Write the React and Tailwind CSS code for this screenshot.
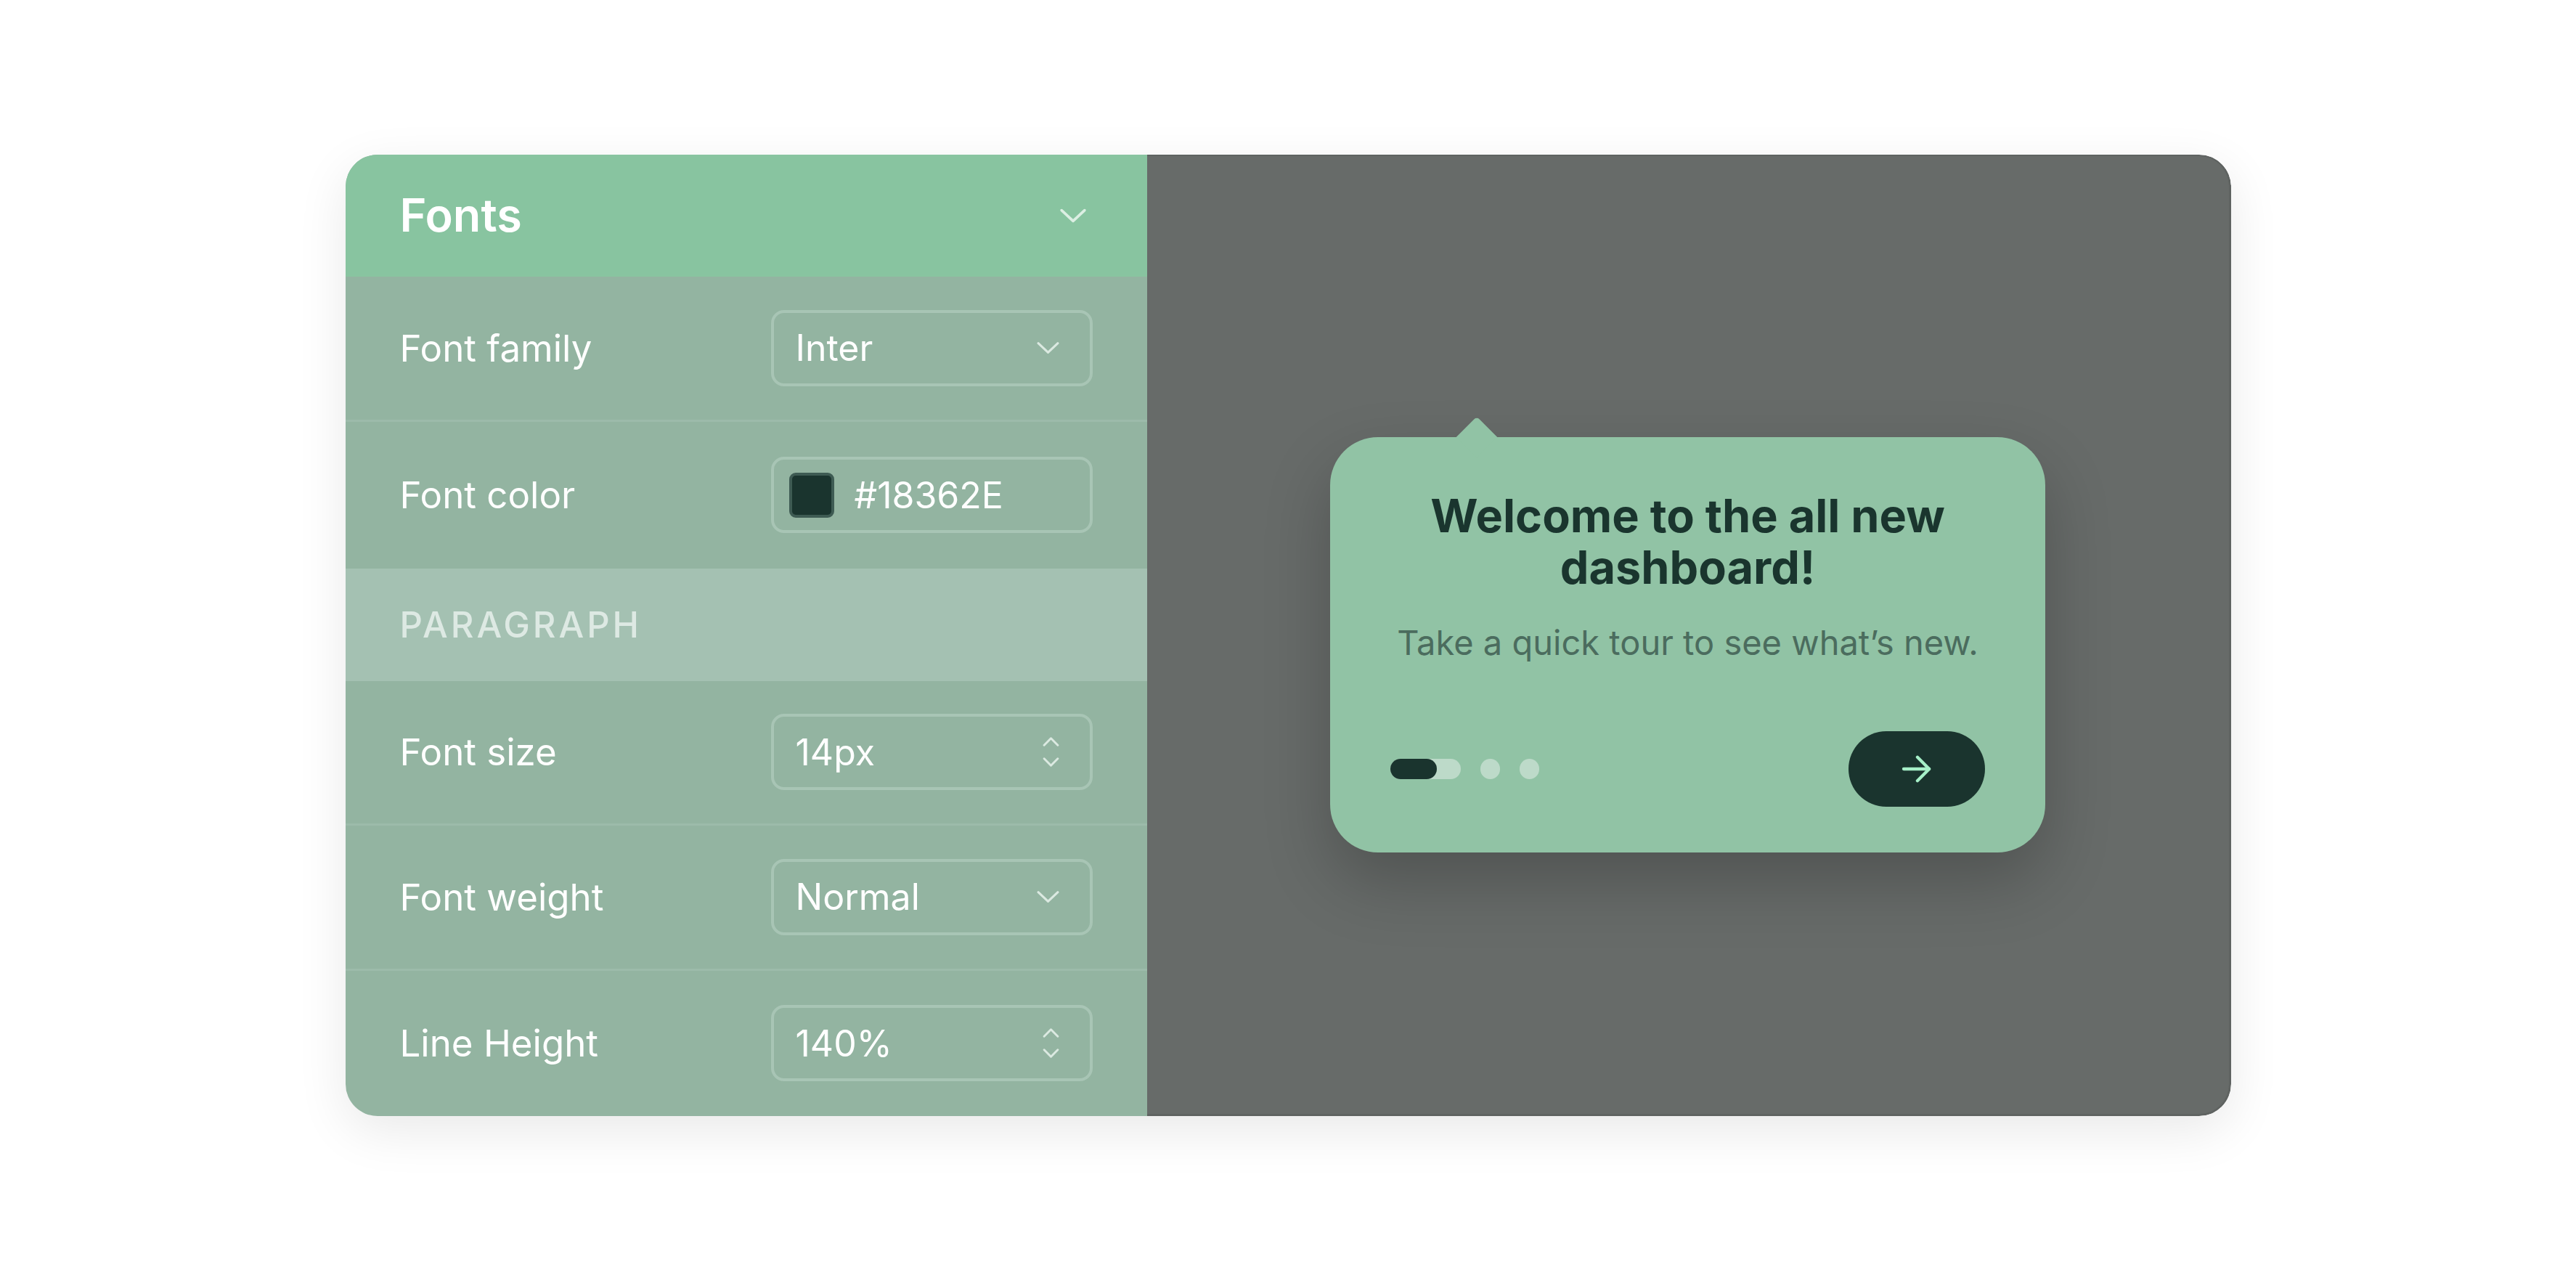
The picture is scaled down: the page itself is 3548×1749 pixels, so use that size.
import React from "react";

function ChevronDown({ className }) {
  return (
    <svg viewBox="0 0 36 20" className={className} fill="none" stroke="currentColor" strokeWidth="3.5" strokeLinecap="round" strokeLinejoin="round">
      <path d="M3 3 L18 17 L33 3" />
    </svg>
  );
}

function Stepper() {
  return (
    <div className="flex flex-col items-center gap-[13px] text-[#dbe9e1]">
      <svg viewBox="0 0 26 16" className="w-[25px] h-[15px]" fill="none" stroke="currentColor" strokeWidth="3.2" strokeLinecap="round" strokeLinejoin="round">
        <path d="M3 13 L13 3 L23 13" />
      </svg>
      <svg viewBox="0 0 26 16" className="w-[25px] h-[15px]" fill="none" stroke="currentColor" strokeWidth="3.2" strokeLinecap="round" strokeLinejoin="round">
        <path d="M3 3 L13 13 L23 3" />
      </svg>
    </div>
  );
}

function Box({ children, right }) {
  return (
    <div className="w-[443px] h-[105px] rounded-[18px] border-[4px] border-[#a8c5b5] flex items-center justify-between pl-[30px] pr-[41px]">
      <div className="flex items-center gap-[31px] text-[50px] text-white leading-none">{children}</div>
      {right}
    </div>
  );
}

function Row({ label, children, h, border }) {
  return (
    <div className={`flex items-center justify-between px-[75px] ${h} ${border ? "border-b-[3px] border-[#9cbbaa]" : ""}`}>
      <span className="text-[51px] text-white leading-none">{label}</span>
      {children}
    </div>
  );
}

export default function App() {
  return (
    <div className="min-h-screen w-full bg-white flex items-center justify-center" style={{ fontFamily: "Inter, 'Noto Sans', sans-serif" }}>
      <div className="w-[2597px] h-[1324px] rounded-[44px] overflow-hidden flex shadow-[0_20px_70px_rgba(0,0,0,0.09)]">
        <div className="w-[1104px] flex flex-col bg-[#93b4a1]">
          <div className="h-[168px] bg-[#88c4a0] flex items-center justify-between px-[75px]">
            <span className="text-[63px] font-semibold text-white leading-none">Fonts</span>
            <ChevronDown className="w-[38px] h-[22px] text-[#dcefe3] mr-[8px]" />
          </div>
          <Row label="Font family" h="h-[200px]" border>
            <Box right={<ChevronDown className="w-[33px] h-[18px] text-[#dbe9e1]" />}>
              <span>Inter</span>
            </Box>
          </Row>
          <Row label="Font color" h="h-[202px]">
            <Box>
              <span className="w-[62px] h-[62px] rounded-[9px] bg-[#1a342e] border-[4px] border-[#3e5b53] -ml-[9px]" />
              <span className="-ml-[3px]">#18362E</span>
            </Box>
          </Row>
          <div className="h-[155px] bg-[#a4c1b2] flex items-center px-[75px]">
            <span className="text-[49px] font-medium text-[#dde9e3] tracking-[0.08em] leading-none">PARAGRAPH</span>
          </div>
          <Row label="Font size" h="h-[199px]" border>
            <Box right={<Stepper />}>
              <span>14px</span>
            </Box>
          </Row>
          <Row label="Font weight" h="h-[200px]" border>
            <Box right={<ChevronDown className="w-[33px] h-[18px] text-[#dbe9e1]" />}>
              <span>Normal</span>
            </Box>
          </Row>
          <Row label="Line Height" h="h-[200px]">
            <Box right={<Stepper />}>
              <span>140%</span>
            </Box>
          </Row>
        </div>
        <div className="flex-1 bg-[#676b69] border-r-[3px] border-b-[3px] border-t-[2px] border-[#5f6361] rounded-r-[44px] flex items-center justify-center">
          <div className="relative mt-[28px] w-[985px] h-[572px] rounded-[66px] bg-[#91c3a5] shadow-[0_40px_90px_rgba(0,0,0,0.22)] flex flex-col items-center pt-[73px] px-[83px] pb-[63px]">
            <div className="absolute -top-[20px] left-[182px] w-[40px] h-[40px] bg-[#91c3a5] rotate-45 rounded-tl-[5px]" />
            <h1 className="relative text-[63px] leading-[71px] font-bold text-[#1a352e] text-center">
              Welcome to the all new
              <br />
              dashboard!
            </h1>
            <p className="relative mt-[37px] text-[47px] leading-[61px] text-[#4b6c5e] text-center">Take a quick tour to see what’s new.</p>
            <div className="relative mt-auto w-full flex items-center justify-between">
              <div className="flex items-center gap-[27px]">
                <div className="relative w-[97px] h-[28px] rounded-full bg-[#bddac9]">
                  <div className="absolute left-0 top-0 w-[64px] h-[28px] rounded-full bg-[#1a342e]" />
                </div>
                <div className="w-[27px] h-[28px] rounded-full bg-[#bddac9]" />
                <div className="w-[27px] h-[28px] rounded-full bg-[#bddac9]" />
              </div>
              <button className="w-[188px] h-[104px] rounded-full bg-[#1a342e] flex items-center justify-center">
                <svg viewBox="0 0 46 40" className="w-[44px] h-[38px]" fill="none" stroke="#a6f0c8" strokeWidth="4.5" strokeLinecap="round" strokeLinejoin="round">
                  <path d="M4 20 H41" />
                  <path d="M24 3 L41 20 L24 37" />
                </svg>
              </button>
            </div>
          </div>
        </div>
      </div>
    </div>
  );
}
